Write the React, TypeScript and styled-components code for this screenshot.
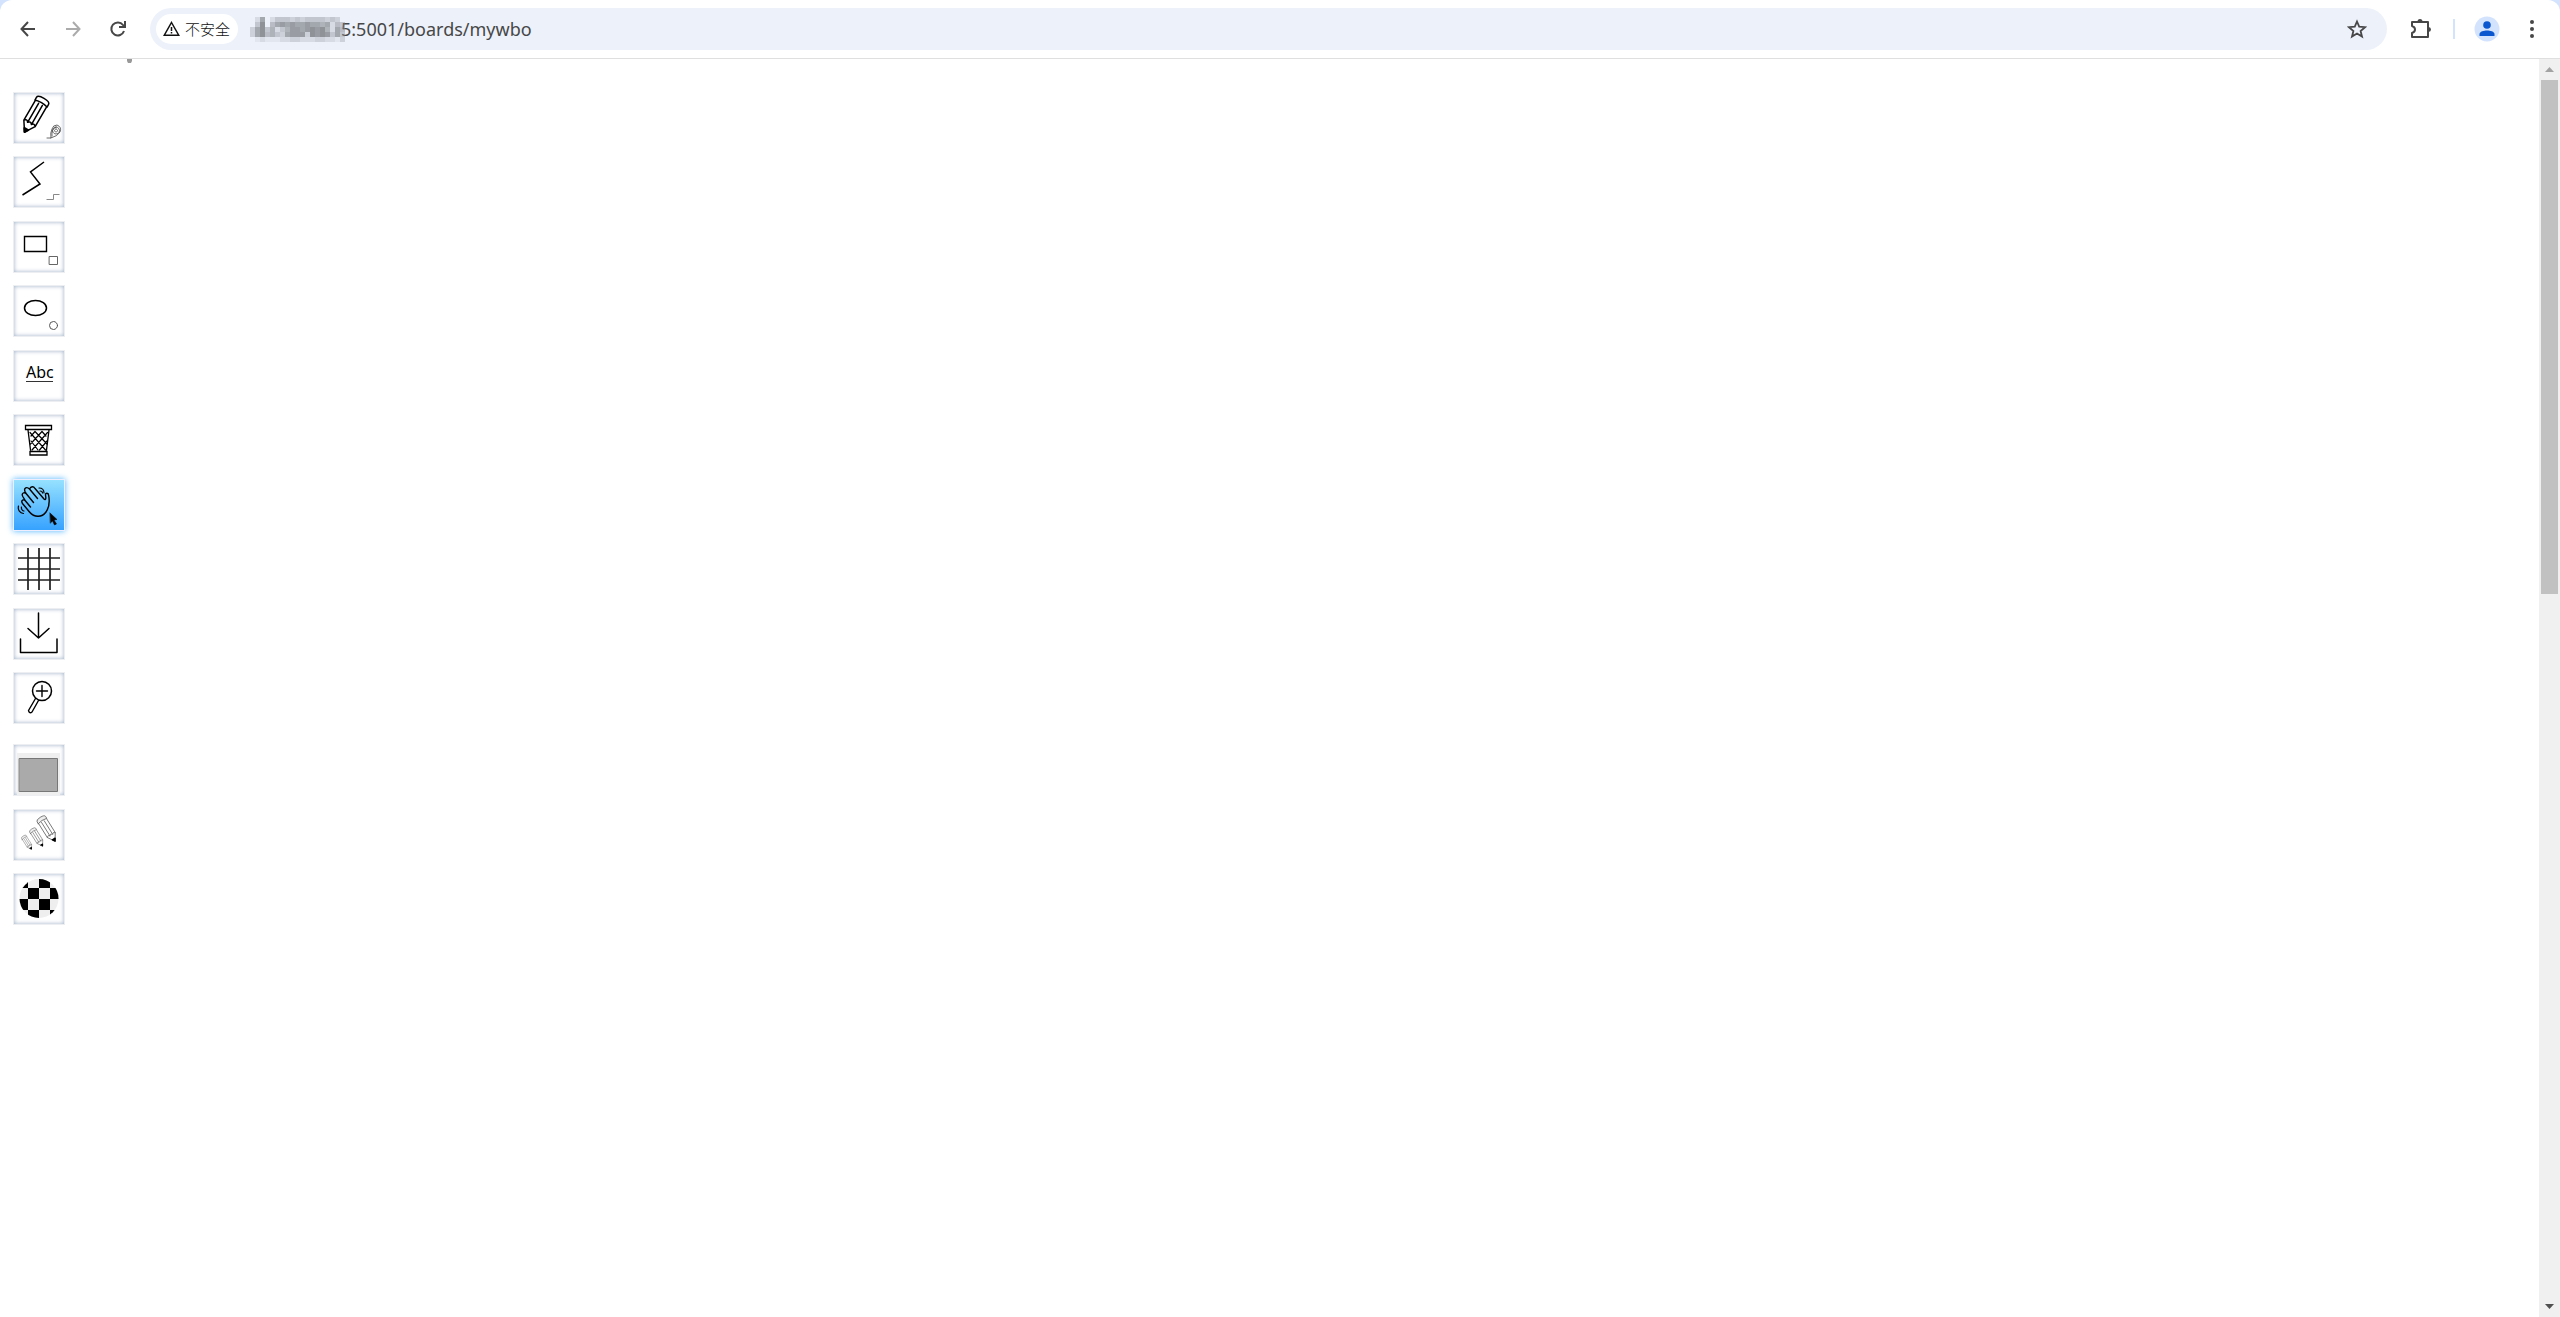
import React from "react";
import styled, { createGlobalStyle } from "styled-components";

const Global = createGlobalStyle`
  *, *::before, *::after { box-sizing: border-box; }
  html, body, #root { height: 100%; margin: 0; }
  body { background: #fff; overflow: hidden; font-family: "Noto Sans", "Noto Sans CJK SC", sans-serif; }
  button { padding: 0; border: 0; background: none; font: inherit; cursor: pointer; }
`;

const Window = styled.div`
  height: 100%;
  display: flex;
  flex-direction: column;
  background: #d3e3fd;
`;

const Toolbar = styled.header`
  height: 59px;
  flex: none;
  display: flex;
  align-items: center;
  padding: 0 8px;
  background: #fff;
  border-bottom: 1px solid #dfdfdf;
  border-radius: 12px 12px 0 0;
`;

const NavGroup = styled.nav`
  display: flex;
  gap: 5px;
  margin-right: 12px;
`;

const IconButton = styled.button<{ $dim?: boolean }>`
  width: 40px;
  height: 40px;
  display: grid;
  place-items: center;
  color: ${(p) => (p.$dim ? "#ababab" : "#474747")};
`;

const AddressBar = styled.form`
  flex: 1;
  min-width: 0;
  height: 42px;
  display: flex;
  align-items: center;
  padding: 0 10px 0 6px;
  border-radius: 21px;
  background: #ecf1fa;
`;

const SecurityChip = styled.button`
  width: 82px;
  height: 30px;
  flex: none;
  display: flex;
  align-items: center;
  gap: 5px;
  padding: 0 7px;
  border-radius: 15px;
  background: #fff;
  color: #111;
  font-family: "Noto Sans CJK SC", sans-serif;
  font-size: 15px;
  font-weight: 300;
  line-height: 20px;
  white-space: nowrap;

  svg { flex: none; }
`;

const HiddenHost = styled.svg`
  flex: none;
  position: relative;
  margin: 0 -4px 0 12px;
`;

const UrlInput = styled.input`
  flex: 1;
  min-width: 0;
  height: 32px;
  padding: 0;
  border: 0;
  outline: 0;
  background: transparent;
  color: #474747;
  font-family: "Noto Sans", sans-serif;
  font-size: 18px;
  line-height: 24px;
`;

const Actions = styled.div`
  display: flex;
  align-items: center;
  margin-left: 14px;
`;

const Account = styled.div`
  display: flex;
  gap: 5px;
`;

const Divider = styled.span`
  width: 2px;
  height: 20px;
  margin: 0 12px;
  background: #d3e3fd;
`;

const Page = styled.main`
  flex: 1;
  min-height: 0;
  display: flex;
  background: #fff;
`;

const Board = styled.section`
  flex: 1;
  min-width: 0;
  display: flex;
  align-items: flex-start;
`;

const Palette = styled.aside`
  width: 127px;
  padding: 33px 0 0 13px;
`;

const ToolList = styled.ul<{ $height: number }>`
  height: ${(p) => p.$height}px;
  margin: 0 0 20px;
  padding: 0;
  list-style: none;
  display: flex;
  flex-direction: column;
  justify-content: space-between;
`;

const ToolButton = styled.button<{ $active?: boolean }>`
  width: 52px;
  height: 52px;
  display: block;
  border: 1px solid ${(p) => (p.$active ? "#eeeeff" : "#eceef2")};
  background: ${(p) => (p.$active ? "linear-gradient(#96e1ff, #36a2ff)" : "#fff")};
  box-shadow: ${(p) => (p.$active ? "0 0 6px #50b4ff" : "inset 0 0 4px #9fb0c8")};

  svg { display: block; }
`;

const Stroke = styled.svg`
  flex: none;
`;

const ScrollTrack = styled.div`
  width: 21px;
  flex: none;
  display: flex;
  flex-direction: column;
  background: #f0f0f0;
`;

const ScrollButton = styled.button`
  height: 21px;
  flex: none;
  display: grid;
  place-items: center;
`;

const Rail = styled.div`
  flex: 1;
  padding: 0 2px;
`;

const Thumb = styled.div`
  height: 42.3%;
  background: #c1c1c1;
`;

const Art = ({ children }: { children: React.ReactNode }) => (
  <svg width="50" height="50" viewBox="0 0 50 50" fill="none" stroke="#000" strokeWidth="1.5" strokeLinecap="round" strokeLinejoin="round" aria-hidden="true">
    {children}
  </svg>
);

const Pencil = ({ x, y, scale, mirror }: { x: number; y: number; scale: number; mirror?: boolean }) => (
  <g transform={`translate(${x} ${y}) rotate(${mirror ? -32 : 30}) scale(${scale})`} strokeWidth={mirror ? 1.1 : 1.5}>
    <path d="M-6.500 0V23L0 33L6.500 23V0M-2.200 1V23M2.200 1V23M-6.500 23Q-4.300 20-2.200 23Q0 20 2.200 23Q4.300 20 6.500 23" />
    <path d="M-7 0V-3Q-7-6 0-6Q7-6 7-3V0Q0-2-7 0Z" fill={mirror ? "#eee" : "#fff"} />
    <path d="M-2.200 29.500L0 33L2.200 29.500Z" fill="#000" stroke="#000" strokeWidth="2" />
  </g>
);

const tools = [
  {
    name: "Pencil",
    art: (
      <>
        <Pencil x={27} y={10.5} scale={1} />
        <path d="M33 45H37Q36 40 38 36Q39 32 43 32Q48 34 46 39Q44 43 37 45M38 43Q37 36 42 34M42 34a3.500 3.500 0 1 0 .1 0M42 36a1.500 1.500 0 1 0 .1 0" strokeWidth=".8" stroke="#444" />
      </>
    ),
  },
  {
    name: "Straight line",
    art: (
      <>
        <path d="M30 5L16.500 15L26 27L8.500 38" strokeLinecap="butt" strokeLinejoin="miter" />
        <path d="M32.500 42.500H39.500V37.500H45.500" stroke="#888" strokeWidth="1" strokeLinecap="butt" strokeLinejoin="miter" />
      </>
    ),
  },
  {
    name: "Rectangle",
    art: (
      <>
        <path d="M10.500 14.500H32.500V29.500H10.500Z" strokeWidth="1.400" strokeLinejoin="miter" />
        <path d="M35.500 34.500H43.500V42.500H35.500Z" stroke="#666" strokeWidth="1" strokeLinejoin="miter" />
      </>
    ),
  },
  {
    name: "Ellipse",
    art: (
      <>
        <ellipse cx="21.500" cy="22" rx="11" ry="7.500" />
        <circle cx="39.500" cy="39.500" r="4" stroke="#555" strokeWidth="1" />
      </>
    ),
  },
  {
    name: "Text",
    art: (
      <>
        <text x="12" y="27" fill="#000" stroke="none" fontFamily="Noto Sans, sans-serif" fontSize="16">Abc</text>
        <path d="M12 30.500H39" stroke="#333" strokeWidth="1" strokeLinecap="butt" />
      </>
    ),
  },
  {
    name: "Eraser",
    art: (
      <>
        <path d="M11.500 10.500H37.500V14.500H11.500ZM14 15L16.500 35M35 15L32.500 35M16 36.500H33V40H16Z" strokeWidth="1.300" strokeLinejoin="miter" />
        <path d="M17 21L21 16.500M16.500 29L28 16.500M18 35L33.500 17.500M25.500 35L33 26M32 21L28 16.500M33 29L21 16.500M31.500 35L16 17.500M24 35L17 26" strokeWidth="1.200" />
      </>
    ),
  },
  {
    name: "Hand",
    active: true,
    art: (
      <>
        <path d="M16.500 27L11.500 21C9.500 18.500 6.500 20.500 8.500 23.500L15.500 32C20.500 38 28 37.500 32 32C35.500 27 35.500 20 34.700 15.500C34.500 12.500 31.500 12.500 31.500 15L31.800 17.500C32 19.500 31 20 30 19L21 8.500C19.500 6 17 6 15.500 9L23.500 18.500M11.500 21L8.800 16.500C7 13 10.500 11.500 12.500 14L19.500 22.500M12.500 14L11 11.500C9.500 7.500 13 6.500 15.500 9" strokeWidth="1.400" />
        <path d="M25 8C28 8 30 10 30 13M26 11C27.500 11 28.500 12 28.500 13M4.500 26C3.500 30 6 33 9.500 33.500M7.500 27C7 29 8.500 31 10 31" strokeWidth="1.200" />
        <path d="M36 33L43 39.500L40 40L42.500 44L40.500 45L38.500 41L36.500 43Z" fill="#000" strokeWidth=".5" />
      </>
    ),
  },
  {
    name: "Grid",
    art: (
      <>
        <path d="M14 4V46M25 4V46M36 4V46" strokeLinecap="butt" />
        <path d="M4 14H46M4 25H46M4 36H46" stroke="#222" strokeWidth="1.700" strokeLinecap="butt" />
      </>
    ),
  },
  {
    name: "Download",
    art: <path d="M24.500 4V29M14 19.500L24.500 29L35 19.500M6.500 30V43.500H43V30" />,
  },
  {
    name: "Zoom",
    art: (
      <>
        <circle cx="28" cy="18" r="9.500" />
        <path d="M22.500 18H33.500M28 12.500V23.500M21.500 25.500L14.500 37.500Q15.500 41 18 39L24.500 27.500" strokeWidth="1.400" />
      </>
    ),
  },
];

const settings = [
  {
    name: "Color",
    art: (
      <>
        <path d="M3 8H46V50H3Z" fill="#efefef" stroke="none" />
        <path d="M5.500 13.500H43.500V46.500H5.500Z" fill="#aaa" stroke="#777" strokeWidth="1" strokeLinejoin="miter" />
      </>
    ),
  },
  {
    name: "Size",
    art: (
      <g stroke="#666">
        <Pencil x={28.5} y={11} scale={0.72} mirror />
        <Pencil x={19.5} y={21.5} scale={0.52} mirror />
        <Pencil x={10.5} y={28} scale={0.4} mirror />
      </g>
    ),
  },
  {
    name: "Opacity",
    art: (
      <g stroke="none">
        <clipPath id="disc"><circle cx="25" cy="24.500" r="19.500" /></clipPath>
        <g clipPath="url(#disc)">
          <path d="M4 4H46V46H4Z" fill="#eee" />
          <path d="M3 3H14V14H3ZM25 3H36V14H25ZM14 14H25V25H14ZM36 14H47V25H36ZM3 25H14V36H3ZM25 25H36V36H25ZM14 36H25V47H14ZM36 36H47V47H36Z" fill="#000" />
        </g>
      </g>
    ),
  },
];

/* One digit per 5px block of the masked host, from 0 (clear) to 9 (darkest). */
const mosaic = [
  "0270244434344443430",
  "0490578787787767254",
  "3794624688789896275",
  "3795643788839898474",
  "0121112233222332213",
];

const App = () => (
  <Window>
    <Global />
    <Toolbar>
      <NavGroup aria-label="Navigation">
        <IconButton aria-label="Back">
          <svg width="16" height="16" viewBox="0 0 16 16" fill="none" stroke="currentColor" strokeWidth="2"><path d="M15 8H2M8 1L1.500 8L8 15" /></svg>
        </IconButton>
        <IconButton aria-label="Forward" $dim>
          <svg width="16" height="16" viewBox="0 0 16 16" fill="none" stroke="currentColor" strokeWidth="2"><path d="M1 8H14M8 1L14.500 8L8 15" /></svg>
        </IconButton>
        <IconButton aria-label="Reload">
          <svg width="18" height="18" viewBox="0 0 18 18" fill="none" stroke="currentColor" strokeWidth="2"><path d="M15 11A6.500 6.500 0 1 1 14 5L15.500 7M16 1V7H10" /></svg>
        </IconButton>
      </NavGroup>
      <AddressBar onSubmit={(e) => e.preventDefault()}>
        <SecurityChip type="button">
          <svg width="17" height="16" viewBox="0 0 17 16" fill="none" stroke="currentColor" strokeWidth="1.500"><path d="M8.500 1.500L15.700 14.200H1.300ZM8.500 6V10M8.500 11V12.500" /></svg>
          不安全
        </SecurityChip>
        <HiddenHost width="95" height="25" viewBox="0 0 95 25" aria-hidden="true" shapeRendering="crispEdges">
          {mosaic.map((row, r) =>
            [...row].map((level, i) => (
              <rect key={`${r}-${i}`} x={i * 5} y={r * 5} width="5" height="5" fill="#85888d" fillOpacity={Number(level) / 10} />
            ))
          )}
        </HiddenHost>
        <UrlInput aria-label="Address" defaultValue="5:5001/boards/mywbo" />
        <IconButton type="button" aria-label="Bookmark">
          <svg width="20" height="20" viewBox="0 0 20 20" fill="none" stroke="currentColor" strokeWidth="1.800"><path d="M10 2.500L12.200 7.700L18 8.200L13.600 12L15 17.500L10 14.500L5 17.500L6.400 12L2 8.200L7.800 7.700Z" /></svg>
        </IconButton>
      </AddressBar>
      <Actions>
        <IconButton aria-label="Extensions">
          <svg width="22" height="22" viewBox="0 0 22 22" fill="none" stroke="currentColor" strokeWidth="2"><path d="M2 4H18V19H2V15Q5 14 5 11.500Q5 9 2 8Z" strokeLinejoin="round" /><path d="M7.500 3.500a2.500 2.500 0 0 1 5 0ZM18.500 9a2.500 2.500 0 0 1 0 5Z" fill="currentColor" stroke="none" /></svg>
        </IconButton>
        <Divider />
        <Account>
          <IconButton aria-label="Profile">
            <svg width="26" height="26" viewBox="0 0 26 26"><circle cx="13" cy="13" r="12.500" fill="#d3e3fd" /><circle cx="13" cy="9" r="3.800" fill="#0b57d0" /><path d="M5.500 20V18C5.500 15.500 10 14.500 13 14.500S20.500 15.500 20.500 18V20Z" fill="#0b57d0" /></svg>
          </IconButton>
          <IconButton aria-label="Menu">
            <svg width="6" height="20" viewBox="0 0 6 20" fill="currentColor"><circle cx="3" cy="3" r="2" /><circle cx="3" cy="10" r="2" /><circle cx="3" cy="17" r="2" /></svg>
          </IconButton>
        </Account>
      </Actions>
    </Toolbar>
    <Page>
      <Board aria-label="Board">
        <Palette>
          <ToolList $height={632}>
            {tools.map((t) => (
              <li key={t.name}><ToolButton aria-label={t.name} $active={t.active}><Art>{t.art}</Art></ToolButton></li>
            ))}
          </ToolList>
          <ToolList $height={181}>
            {settings.map((t) => (
              <li key={t.name}><ToolButton aria-label={t.name}><Art>{t.art}</Art></ToolButton></li>
            ))}
          </ToolList>
        </Palette>
        <Stroke width="6" height="4" viewBox="0 0 6 4" aria-hidden="true"><path d="M0 0H5V2L4 4H1L0 2Z" fill="#999" /></Stroke>
      </Board>
      <ScrollTrack>
        <ScrollButton aria-label="Scroll up"><svg width="9" height="5" viewBox="0 0 9 5"><path d="M0 5L4.500 0L9 5Z" fill="#a3a3a3" /></svg></ScrollButton>
        <Rail><Thumb /></Rail>
        <ScrollButton aria-label="Scroll down"><svg width="9" height="5" viewBox="0 0 9 5"><path d="M0 0L4.500 5L9 0Z" fill="#505050" /></svg></ScrollButton>
      </ScrollTrack>
    </Page>
  </Window>
);

export default App;
